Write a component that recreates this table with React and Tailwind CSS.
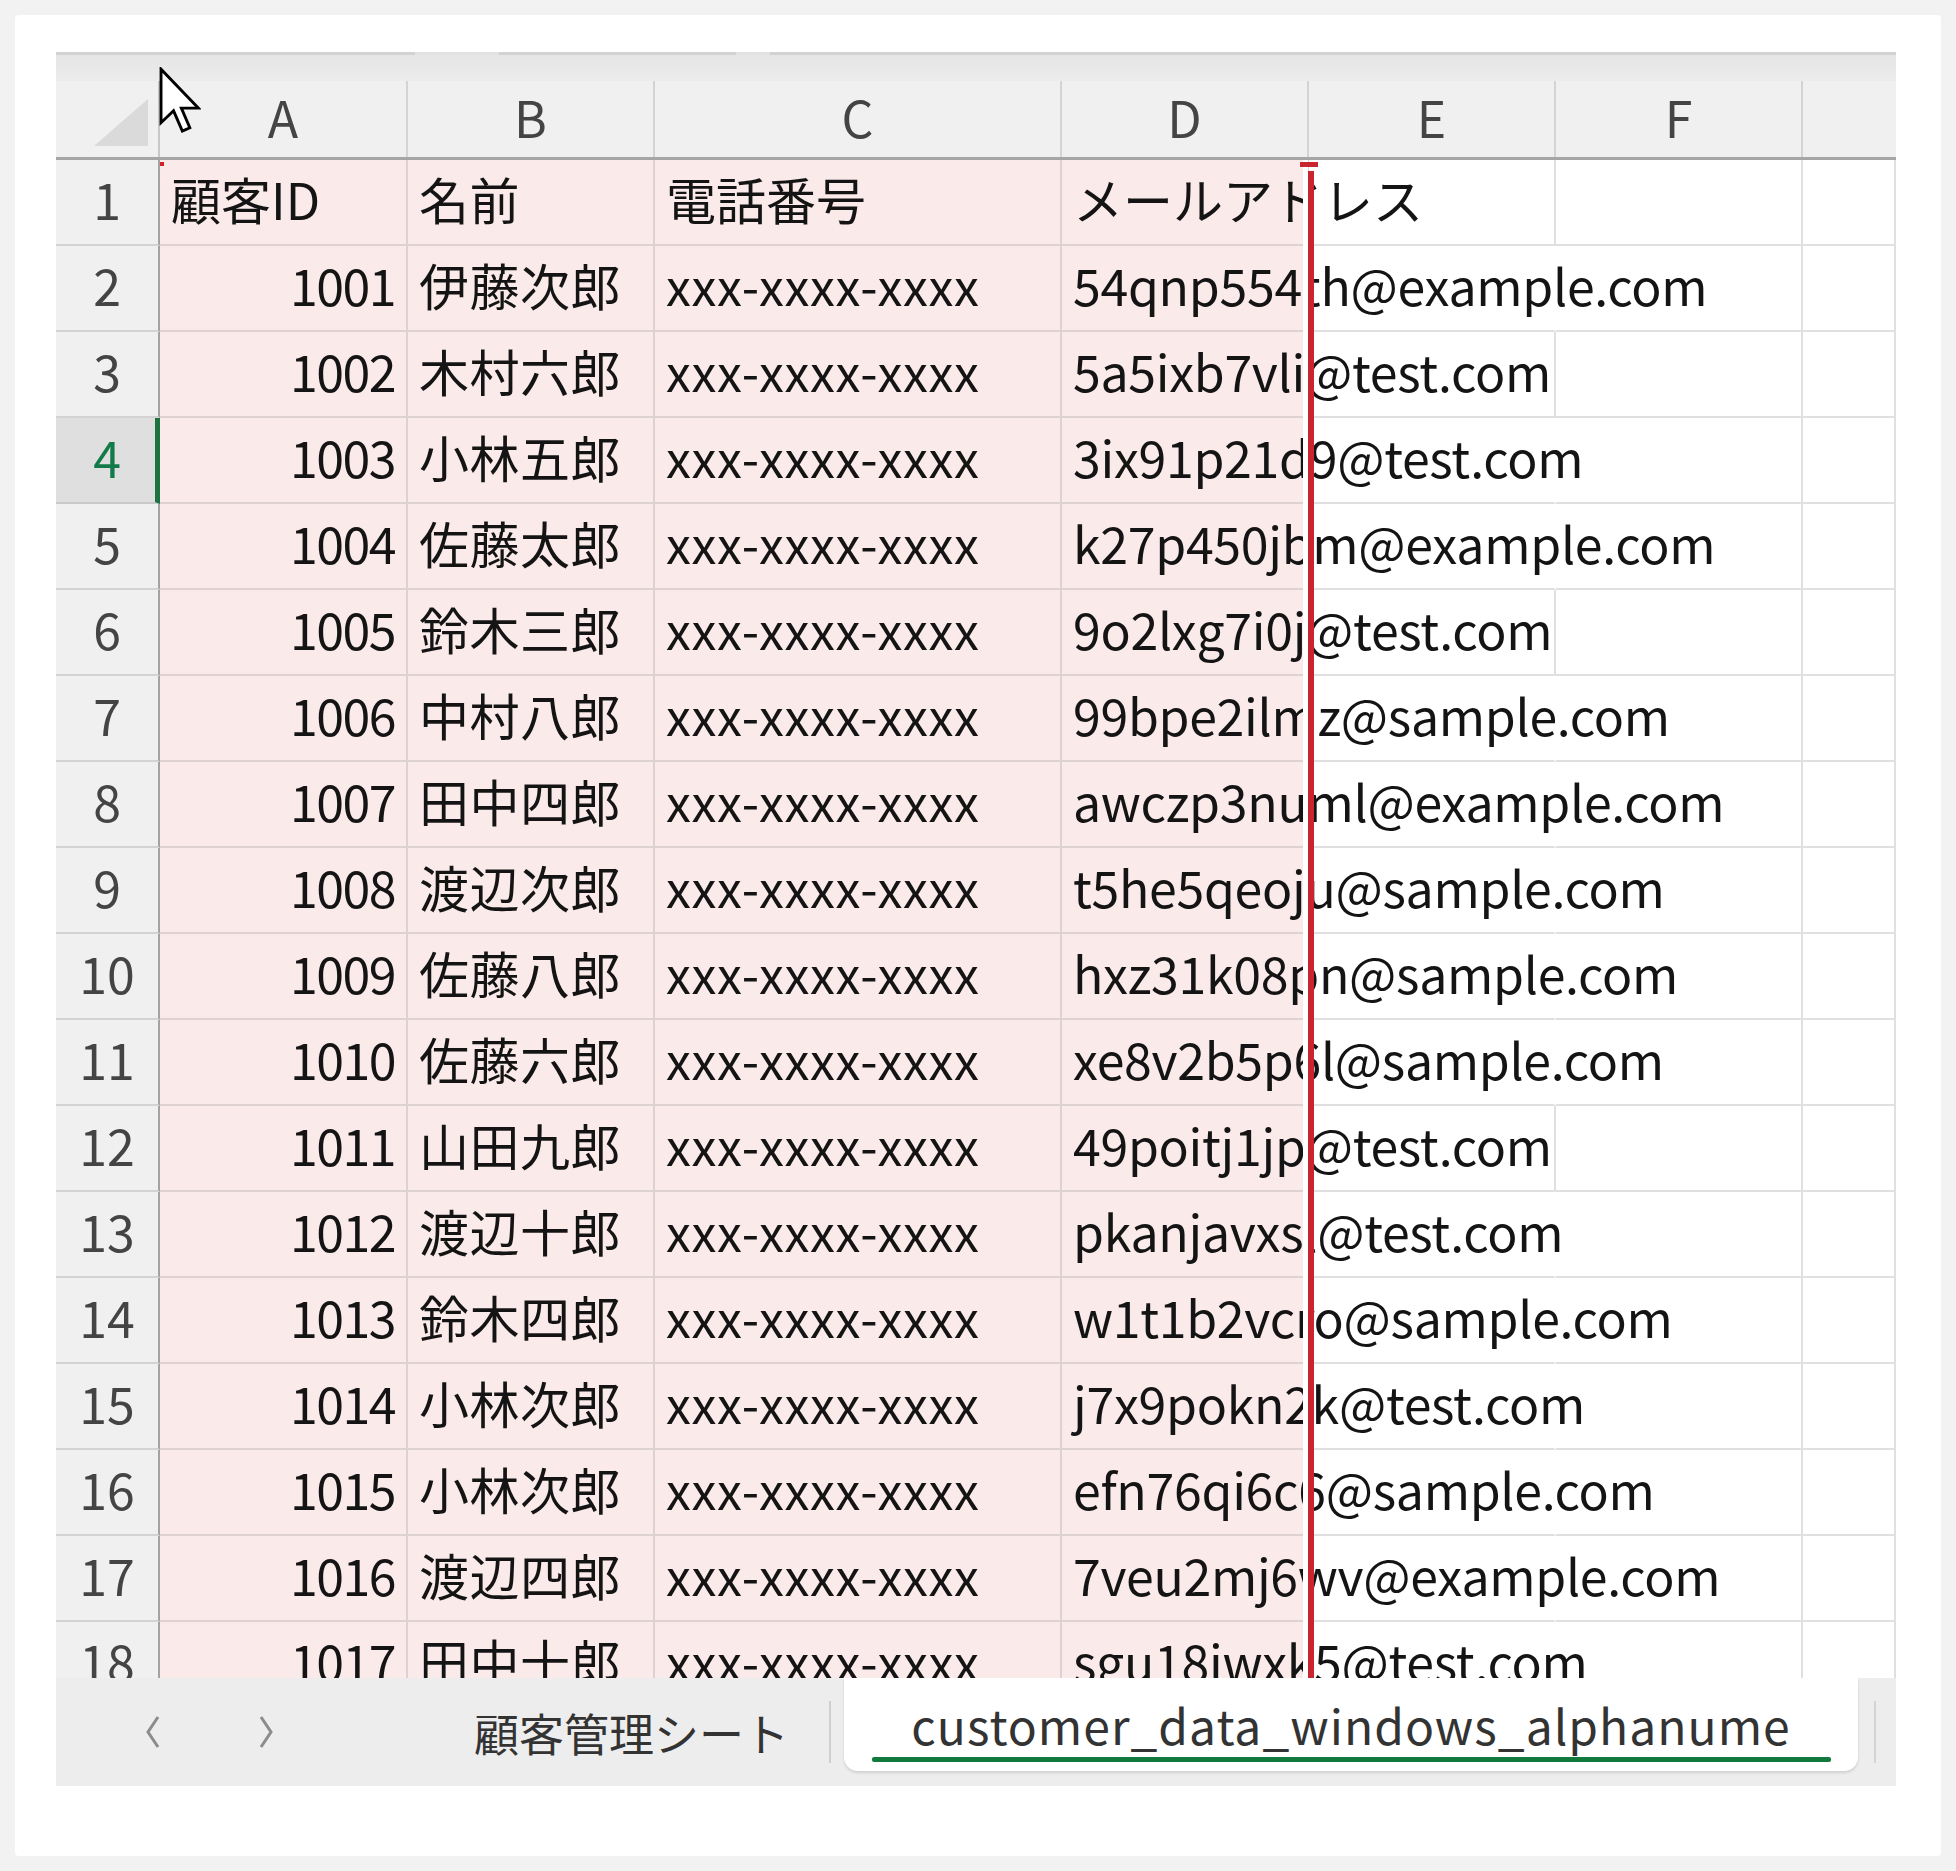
import React from "react";

const rows = [
  ["1001", "伊藤次郎", "54qnp554th@example.com", true],
  ["1002", "木村六郎", "5a5ixb7vli@test.com", false],
  ["1003", "小林五郎", "3ix91p21d9@test.com", true],
  ["1004", "佐藤太郎", "k27p450jbm@example.com", true],
  ["1005", "鈴木三郎", "9o2lxg7i0j@test.com", false],
  ["1006", "中村八郎", "99bpe2ilmz@sample.com", true],
  ["1007", "田中四郎", "awczp3numl@example.com", true],
  ["1008", "渡辺次郎", "t5he5qeoju@sample.com", true],
  ["1009", "佐藤八郎", "hxz31k08pn@sample.com", true],
  ["1010", "佐藤六郎", "xe8v2b5p6l@sample.com", true],
  ["1011", "山田九郎", "49poitj1jp@test.com", false],
  ["1012", "渡辺十郎", "pkanjavxsl@test.com", true],
  ["1013", "鈴木四郎", "w1t1b2vcro@sample.com", true],
  ["1014", "小林次郎", "j7x9pokn2k@test.com", true],
  ["1015", "小林次郎", "efn76qi6c6@sample.com", true],
  ["1016", "渡辺四郎", "7veu2mj6wv@example.com", true],
  ["1017", "田中十郎", "sgu18iwxk5@test.com", true],
];

const COLS = "grid grid-cols-[104px_248px_247px_407px_247px_247px_247px_93px]";
const PINK = "h-[86px] bg-[#fbeaea] border-r-2 border-b-2 border-[#ddd1d1] px-[11px] pb-[8px] flex items-center min-w-0";
const WHITE = "h-[86px] bg-white border-b-2 border-[#e0e0e0]";

function RowHeader({ n, active }) {
  if (active) {
    return (
      <div className="h-[86px] flex items-center justify-center bg-[#dfdfdf] border-r-[5px] border-r-[#1d7341] border-b-2 border-b-[#c9c9c9] text-[#137a4a] pl-[3px] pb-[8px]">
        {n}
      </div>
    );
  }
  return (
    <div className="h-[86px] flex items-center justify-center bg-[#f0f0f0] border-r-2 border-r-[#a3a3a3] border-b-2 border-b-[#d3d3d3] text-[#444] pb-[8px]">
      {n}
    </div>
  );
}

function DataRow({ n, a, b, c, d, aRight, spill }) {
  return (
    <div className={`${COLS} grid-rows-[86px] h-[86px] shrink-0`}>
      <RowHeader n={n} active={n === 4} />
      <div className={`${PINK} ${aRight ? "justify-end" : ""}`}>
        <span className={`whitespace-nowrap ${aRight ? "tracking-[-1.5px]" : ""}`}>{a}</span>
      </div>
      <div className={PINK}>
        <span className="whitespace-nowrap tracking-[0.5px]">{b}</span>
      </div>
      <div className={PINK}>
        <span className={`whitespace-nowrap ${aRight ? "tracking-[0.6px]" : ""}`}>{c}</span>
      </div>
      <div className={`${PINK} overflow-visible`}>
        <span className={`relative z-10 whitespace-nowrap ${aRight ? "tracking-[-0.3px]" : ""}`}>{d}</span>
      </div>
      <div className={`${WHITE} border-r-2 ${spill ? "border-r-white" : "border-r-[#e0e0e0]"}`} />
      <div className={`${WHITE} border-r-2 border-r-[#e0e0e0]`} />
      <div className={`${WHITE} border-r-2 border-r-[#e0e0e0]`} />
      <div className={WHITE} />
    </div>
  );
}

export default function App() {
  return (
    <div className="relative w-[1956px] h-[1871px] bg-[#f2f2f2] p-[15px] font-['Noto_Sans_CJK_JP','Noto_Sans',sans-serif]">
      <div className="w-[1926px] h-[1841px] bg-white rounded-[4px] pl-[41px] pt-[37px]">
        <div className="w-[1840px] flex flex-col">
          {/* top strip */}
          <div className="h-[29px] bg-gradient-to-b from-[#e4e4e4] to-[#ececec] flex flex-col">
            <div className="flex h-[3px]">
              <div className="w-[359px] bg-[#d2d2d2]" />
              <div className="w-[84px] bg-[#e2e2e2]" />
              <div className="w-[237px] bg-[#d2d2d2]" />
              <div className="w-[34px] bg-[#e2e2e2]" />
              <div className="flex-1 bg-[#d2d2d2]" />
            </div>
          </div>

          {/* column headers */}
          <div className={`${COLS} grid-rows-[76px] h-[79px] bg-[#f0f0f0] border-b-[3px] border-b-[#a6a6a6] text-[50px] leading-none text-[#444]`}>
            <div className="flex items-end justify-end pr-[10px] pb-[11px] border-r-2 border-r-[#c8c8c8]">
              <svg width="54" height="47" viewBox="0 0 54 47">
                <polygon points="54,0 54,47 0,47" fill="#dadada" />
              </svg>
            </div>
            {["A", "B", "C", "D", "E", "F", ""].map((l, i) => (
              <div
                key={i}
                className={`flex items-center justify-center pb-[6px] ${i < 6 ? "border-r-2 border-r-[#d4d4d4]" : ""}`}
              >
                {l}
              </div>
            ))}
          </div>

          {/* grid body */}
          <div className="relative h-[1518px] overflow-hidden flex flex-col text-[50px] leading-none text-[#141414]">
            <DataRow n={1} a="顧客ID" b="名前" c="電話番号" d="メールアドレス" aRight={false} spill={false} />
            {rows.map((r, i) => (
              <DataRow
                key={i}
                n={i + 2}
                a={r[0]}
                b={r[1]}
                c="xxx-xxxx-xxxx"
                d={r[2]}
                aRight={true}
                spill={r[3]}
              />
            ))}
            {/* selection marks */}
            <div className="absolute left-[104px] top-[2px] w-[4px] h-[4px] bg-[#d0202a]" />
            <div className="absolute left-[1247px] top-0 bottom-0 w-[5px] bg-white z-20" />
            <div className="absolute left-[1252px] top-[11px] bottom-0 w-[6px] bg-[#c9252f] z-20" />
            <div className="absolute left-[1244px] top-[2px] w-[18px] h-[5px] bg-[#c9252f] z-20" />
          </div>

          {/* sheet tabs */}
          <div className="h-[108px] bg-[#ededed] flex items-center">
            <svg className="ml-[88px]" width="18" height="34" viewBox="0 0 18 34">
              <polyline points="14,2 4,17 14,32" fill="none" stroke="#8c8c8c" strokeWidth="3" />
            </svg>
            <svg className="ml-[95px]" width="18" height="34" viewBox="0 0 18 34">
              <polyline points="4,2 14,17 4,32" fill="none" stroke="#8c8c8c" strokeWidth="3" />
            </svg>
            <div className="ml-[199px] text-[45px] leading-none text-[#333] whitespace-nowrap">顧客管理シート</div>
            <div className="ml-[40px] w-[2px] h-[62px] bg-[#cfcfcf]" />
            <div className="ml-[13px] self-start w-[1014px] h-[93px] bg-white rounded-b-[14px] shadow-[0_2px_3px_rgba(0,0,0,0.12)] flex flex-col items-center pt-[20px]">
              <div className="text-[48px] leading-[52px] text-[#333] whitespace-nowrap tracking-[1px]">customer_data_windows_alphanume</div>
              <div className="mt-[7px] w-[959px] h-[5px] bg-[#137a3e] rounded-[2px]" />
            </div>
            <div className="ml-[16px] w-[2px] h-[62px] bg-[#d4d4d4]" />
          </div>
        </div>
      </div>

      {/* mouse cursor */}
      <svg className="absolute left-[159px] top-[67px]" width="42" height="68" viewBox="0 0 12.4 20">
        <path
          d="M0.6 0.6 L0.6 16.4 L4.3 12.9 L6.9 18.9 L9.1 17.9 L6.6 12.1 L11.6 12.1 Z"
          fill="#ffffff"
          stroke="#000000"
          strokeWidth="0.85"
          strokeLinejoin="miter"
        />
      </svg>
    </div>
  );
}
